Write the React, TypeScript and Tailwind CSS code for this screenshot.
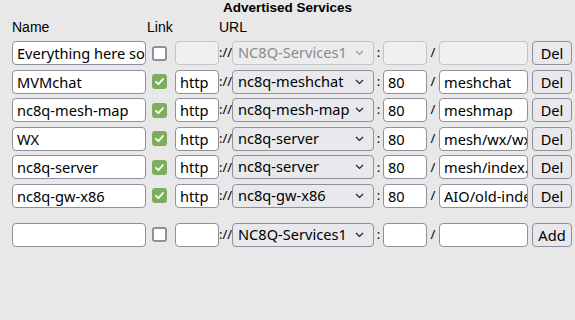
import { Fragment } from "react";

type Service = {
  name: string;
  link: boolean;
  proto: string;
  host: string;
  port: string;
  path: string;
  disabled?: boolean;
};

const services: Service[] = [
  { name: "Everything here so", link: false, proto: "", host: "NC8Q-Services1", port: "", path: "", disabled: true },
  { name: "MVMchat", link: true, proto: "http", host: "nc8q-meshchat", port: "80", path: "meshchat" },
  { name: "nc8q-mesh-map", link: true, proto: "http", host: "nc8q-mesh-map", port: "80", path: "meshmap" },
  { name: "WX", link: true, proto: "http", host: "nc8q-server", port: "80", path: "mesh/wx/wx.html" },
  { name: "nc8q-server", link: true, proto: "http", host: "nc8q-server", port: "80", path: "mesh/index.html" },
  { name: "nc8q-gw-x86", link: true, proto: "http", host: "nc8q-gw-x86", port: "80", path: "AIO/old-index.html" },
];

const field =
  "h-6 rounded-[4px] border border-[#8f8f9d] px-[4px] text-[14.6px] leading-[22px] text-black overflow-hidden whitespace-nowrap";

function Box({ value, w, disabled }: { value: string; w: string; disabled?: boolean }) {
  return (
    <div className={`${field} ${w} ${disabled ? "bg-[#f0f0f0] border-[#c4c4c8]" : "bg-white"}`}>
      {value}
    </div>
  );
}

function Check({ on }: { on: boolean }) {
  if (on) {
    return (
      <div className="w-[15px] h-[15px] rounded-[3px] bg-[#7dae5e] flex items-center justify-center">
        <svg width="11" height="11" viewBox="0 0 11 11">
          <path d="M2 5.8 L4.4 8.2 L9 3" fill="none" stroke="white" strokeWidth="1.8" strokeLinecap="round" strokeLinejoin="round" />
        </svg>
      </div>
    );
  }
  return <div className="w-[15px] h-[15px] rounded-[3px] border-2 border-[#8f8f9d] bg-white" />;
}

function Select({ value, disabled }: { value: string; disabled?: boolean }) {
  return (
    <div
      className={`h-6 w-[142px] rounded-[4px] border flex items-center pl-[5px] pr-[9px] text-[14.6px] ${
        disabled
          ? "bg-[#ececef] border-[#c4c4c8] text-[#8a8a8a]"
          : "bg-[#e9e9ed] border-[#8f8f9d] text-black"
      }`}
    >
      <span className="flex-1 overflow-hidden whitespace-nowrap">{value}</span>
      <svg width="9" height="6" viewBox="0 0 9 6" className="shrink-0">
        <path
          d="M1 1 L4.5 4.5 L8 1"
          fill="none"
          stroke={disabled ? "#9a9a9a" : "#222"}
          strokeWidth="1.2"
        />
      </svg>
    </div>
  );
}

function Btn({ label }: { label: string }) {
  return (
    <button className="h-6 w-[40px] ml-[4px] rounded-[4px] border border-[#8f8f9d] bg-[#e9e9ed] text-[14.6px] leading-[22px] text-black">
      {label}
    </button>
  );
}

function Row({ s, action }: { s: Service; action: string }) {
  return (
    <div className="flex items-center">
      <Box value={s.name} w="w-[134px]" />
      <div className="w-[6px]" />
      <Check on={s.link} />
      <div className="w-[8px]" />
      <Box value={s.proto} w="w-[44px]" disabled={s.disabled} />
      <span className="w-[13px] text-center text-[13px] text-black">://</span>
      <Select value={s.host} disabled={s.disabled} />
      <span className="w-[9px] text-center text-[13px] text-black">:</span>
      <Box value={s.port} w="w-[44px]" disabled={s.disabled} />
      <span className="w-[12px] text-center text-[13px] text-black">/</span>
      <Box value={s.path} w="w-[89px]" disabled={s.disabled} />
      <Btn label={action} />
    </div>
  );
}

export default function App() {
  return (
    <main
      className="w-[575px] h-[320px] bg-[#e8e8e8] pl-[12px] pt-0"
      style={{ fontFamily: '"Noto Sans", "Open Sans", sans-serif' }}
    >
      <div
        className="text-center font-bold text-[13.5px] leading-[16px] text-black pr-[12px]"
        style={{ fontFamily: '"Liberation Sans", Arial, sans-serif' }}
      >
        Advertised Services
      </div>
      <div
        className="flex text-[14px] leading-[16px] text-black mt-[3px] h-[20px]"
        style={{ fontFamily: '"Liberation Sans", Arial, sans-serif' }}
      >
        <span className="w-[135px]">Name</span>
        <span className="w-[72px]">Link</span>
        <span>URL</span>
      </div>
      <div className="flex flex-col gap-[4.6px] mt-[2px]">
        {services.map((s, i) => (
          <Fragment key={i}>
            <Row s={s} action="Del" />
          </Fragment>
        ))}
      </div>
      <div className="mt-[15px]">
        <Row
          s={{ name: "", link: false, proto: "", host: "NC8Q-Services1", port: "", path: "" }}
          action="Add"
        />
      </div>
    </main>
  );
}
